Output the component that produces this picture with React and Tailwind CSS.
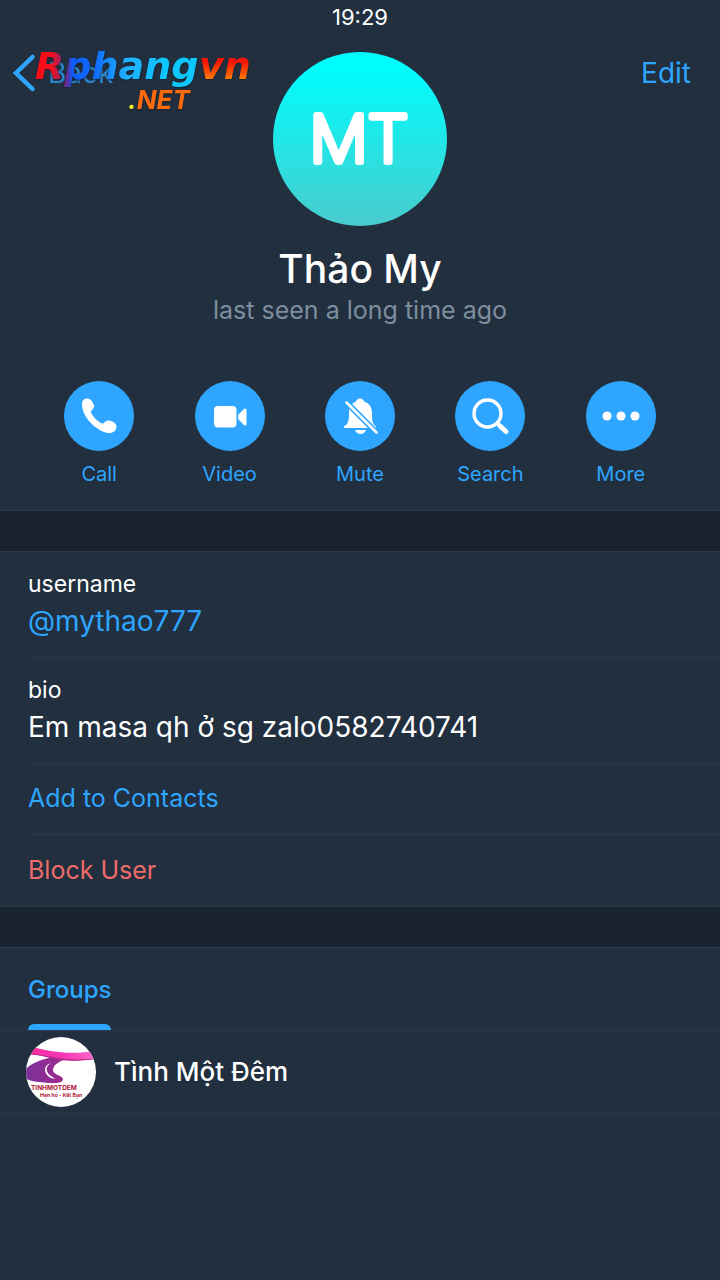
const actions = [
  { label: "Call", icon: <CallIcon /> },
  { label: "Video", icon: <VideoIcon /> },
  { label: "Mute", icon: <MuteIcon /> },
  { label: "Search", icon: <SearchIcon /> },
  { label: "More", icon: <MoreIcon /> },
];

function CallIcon() {
  return (
    <svg viewBox="0 0 70 70" className="size-[70px]" fill="white" aria-hidden="true">
      <path d="M18 23C18 19 21 17 24 17.5C27 18 29 21 30 24.5C30.8 27.5 27 29 27 31C27 34 35 42 38.5 42.5C40.5 42.5 41.5 39 45 39.5C48.5 40 52.5 42.5 52.5 45.5C52.5 49.5 49 52.5 44 52C35 51 18 38 18 23Z" />
    </svg>
  );
}

function VideoIcon() {
  return (
    <svg viewBox="0 0 70 70" className="size-[70px]" fill="white" aria-hidden="true">
      <rect x="19" y="25" width="22.5" height="21.5" rx="4" />
      <path d="M43.5 33.5L49 28C50 27 51.500 27.5 51.500 29V43C51.500 44.500 50 45 49 44L43.500 38.500C42.900 37 42.900 35 43.500 33.500Z" />
    </svg>
  );
}

function MuteIcon() {
  return (
    <svg viewBox="0 0 70 70" className="size-[70px]" aria-hidden="true">
      <path
        fill="white"
        d="M19 47V45.500C23 43 24 40 24 34V31C24 25 27 22 31 20.500C31 19 33 17.500 35 17.500C37 17.500 39 19 39 20.500C44 22 47 26 47 32V35C47 41 48 43 51 45.500V47ZM30 49H41C40 51.500 38 53 35.500 53C33 53 31 51.500 30 49Z"
      />
      <path stroke="#2ea6ff" strokeWidth="6" d="M20 20L53 53" />
      <path stroke="white" strokeWidth="2.500" strokeLinecap="round" d="M21.500 21.500L51.500 51.500" />
    </svg>
  );
}

function SearchIcon() {
  return (
    <svg viewBox="0 0 70 70" className="size-[70px]" fill="none" stroke="white" strokeLinecap="round" aria-hidden="true">
      <circle cx="32.500" cy="32.500" r="13.500" strokeWidth="3.400" />
      <path strokeWidth="3.500" d="M42.500 42.500L45 45" />
      <path strokeWidth="5" d="M45 45L51 50.500" />
    </svg>
  );
}

function MoreIcon() {
  return (
    <svg viewBox="0 0 70 70" className="size-[70px]" fill="white" aria-hidden="true">
      <circle cx="21" cy="35" r="4.500" />
      <circle cx="35" cy="35" r="4.500" />
      <circle cx="49" cy="35" r="4.500" />
    </svg>
  );
}

function Watermark() {
  return (
    <svg viewBox="0 0 232 84" className="pointer-events-none absolute left-8 top-9 w-[232px]" role="img" aria-label="Rphangvn.NET">
      <defs>
        <linearGradient id="mark" gradientUnits="userSpaceOnUse" x1="0" y1="0" x2="224" y2="0">
          <stop offset="0" stopColor="#ff0a12" />
          <stop offset="0.090" stopColor="#f0101c" />
          <stop offset="0.160" stopColor="#5a30a0" />
          <stop offset="0.180" stopColor="#0f5cff" />
          <stop offset="0.280" stopColor="#0f6cff" />
          <stop offset="0.420" stopColor="#1fb0ff" />
          <stop offset="0.600" stopColor="#0cc8ff" />
        </linearGradient>
        <linearGradient id="fire" x1="0" y1="0" x2="0" y2="1">
          <stop offset="0.400" stopColor="#f81408" />
          <stop offset="0.800" stopColor="#ff7a00" />
        </linearGradient>
      </defs>
      <g fontWeight="700" fontStyle="italic" className="drop-shadow-[0_1px_1px_#182230]">
        <g fontFamily="'DejaVu Sans', sans-serif" fontSize="38">
          <text x="3" y="43" fill="url(#mark)">Rphang</text>
          <text x="167" y="43" fill="url(#fire)">vn</text>
        </g>
        <text x="96" y="73" fontFamily="Inter, sans-serif" fontSize="26" fill="#ff6a0a">
          <tspan fill="#f8f020">.</tspan>NET
        </text>
      </g>
    </svg>
  );
}

function GroupAvatar() {
  return (
    <svg viewBox="0 0 70 70" className="size-[70px] shrink-0" aria-hidden="true">
      <defs>
        <clipPath id="round"><circle cx="35" cy="35" r="35" /></clipPath>
        <linearGradient id="ribbon" x1="0" y1="0" x2="1" y2="0">
          <stop offset="0" stopColor="#ff2c9c" />
          <stop offset="0.500" stopColor="#f235b6" />
          <stop offset="1" stopColor="#ff69c9" />
        </linearGradient>
        <linearGradient id="road" x1="0" y1="0" x2="1" y2="0">
          <stop offset="0" stopColor="#7c309c" />
          <stop offset="1" stopColor="#a02a8c" />
        </linearGradient>
      </defs>
      <g clipPath="url(#round)">
        <rect width="70" height="70" fill="white" />
        <path
          fill="url(#road)"
          d="M26 20C12 24 -2 28 -2 38C-2 44 10 45 22 46C30 46.500 37 46 37 42C36 38 27 38 27 33C27 28 33 24 42 22C36 21 30 20 26 20Z"
        />
        <path fill="white" d="M25 26C21 29 20 31 21 34C22 38 26 39 29 42C25 42 19 38 19 33C19 29 22 27 25 26Z" />
        <path fill="url(#ribbon)" d="M0 8C22 15 44 18 70 14V21C52 25 38 24 26 21C16 19 8 16 0 18Z" />
        <path fill="none" stroke="#b32487" strokeWidth="1.200" d="M4 17C22 18 35 26 67 22" />
      </g>
      <g fontFamily="Inter, sans-serif" fontWeight="700" fill="#b01632">
        <text x="5" y="53" fontSize="6.500">TINHMOTDEM</text>
        <text x="14" y="60" fontSize="5.200">Hẹn hò - Kết Bạn</text>
      </g>
    </svg>
  );
}

const Header = () => {
  return (
    <header className="relative flex flex-col items-center border-b border-[#2b3a4a] pb-[21px]">
      <div className="h-[34px] text-[22px] leading-[34px]">19:29</div>
      <nav className="absolute inset-x-0 top-[51px] flex h-11 items-center justify-between pl-3 pr-[29px] text-[28px] text-[#2ea6ff]">
        <button className="flex items-center gap-3">
          <svg viewBox="0 0 24 44" className="h-11 w-6" fill="none" stroke="currentColor" strokeWidth="4.500" strokeLinecap="round" aria-hidden="true">
            <path d="M20.500 6L4 22L20.500 38" />
          </svg>
          <span className="opacity-75">Back</span>
        </button>
        <button>Edit</button>
      </nav>
      <Watermark />
      <svg viewBox="0 0 174 174" className="mt-[18px] size-[174px]" role="img" aria-label="MT">
        <defs>
          <linearGradient id="avatar" x1="0" y1="0" x2="0" y2="1">
            <stop offset="0.100" stopColor="#00fcfd" />
            <stop offset="1" stopColor="#4acccd" />
          </linearGradient>
        </defs>
        <circle cx="87" cy="87" r="87" fill="url(#avatar)" />
        <text x="86" y="110" textAnchor="middle" fontFamily="Inter, sans-serif" fontSize="65" fontWeight="200" fill="white" stroke="white" strokeWidth="6" strokeLinejoin="round">
          MT
        </text>
      </svg>
      <h1 className="mt-[18px] text-[39px] font-medium leading-[50px]">Thảo My</h1>
      <p className="text-[25px] leading-8 text-[#7d8e9e]">last seen a long time ago</p>
      <div className="mt-[55px] grid w-full grid-cols-5 px-[34px]">
        {actions.map(({ label, icon }) => (
          <button key={label} className="flex flex-col items-center gap-2 text-xl leading-[30px] text-[#2ea6ff]">
            <span className="rounded-full bg-[#2ea6ff]">{icon}</span>
            {label}
          </button>
        ))}
      </div>
    </header>
  );
};

const Field = ({ label, children }) => {
  return (
    <div className="ml-7 border-b border-[#2b3a4a] pb-[15px] pt-4">
      <dt className="text-[23px] leading-8">{label}</dt>
      <dd className="text-[28px] leading-[42px]">{children}</dd>
    </div>
  );
};

export default function App() {
  return (
    <div className="min-h-screen bg-[#212f3f] font-['Inter',sans-serif] text-white">
      <Header />
      <main>
        <section className="border-b border-t-[40px] border-b-[#2b3a4a] border-t-[#1a2430]">
          <dl className="border-t border-[#2b3a4a]">
            <Field label="username">
              <a href="#username" className="text-[#2ea6ff]">@mythao777</a>
            </Field>
            <Field label="bio">Em masa qh ở sg zalo0582740741</Field>
          </dl>
          <div className="ml-7 border-b border-[#2b3a4a]">
            <button className="block h-[70px] w-full text-left text-[25px] text-[#2ea6ff]">Add to Contacts</button>
          </div>
          <button className="ml-7 block h-[71px] text-left text-[25px] text-[#ef6b6b]">Block User</button>
        </section>
        <section className="border-t-[40px] border-[#1a2430]">
          <div className="flex border-y border-[#2b3a4a] px-7">
            <button className="flex h-[82px] flex-col justify-between pt-[26px] text-2xl font-medium leading-8 text-[#2ea6ff]">
              Groups
              <span className="h-1.5 w-full rounded-t-md bg-[#2ea6ff]" />
            </button>
          </div>
          <a href="#group" className="flex items-center gap-[18px] border-b border-[#2b3a4a] py-1.5 pl-[26px] text-[26px] font-medium leading-8">
            <GroupAvatar />
            Tình Một Đêm
          </a>
        </section>
      </main>
    </div>
  );
}
